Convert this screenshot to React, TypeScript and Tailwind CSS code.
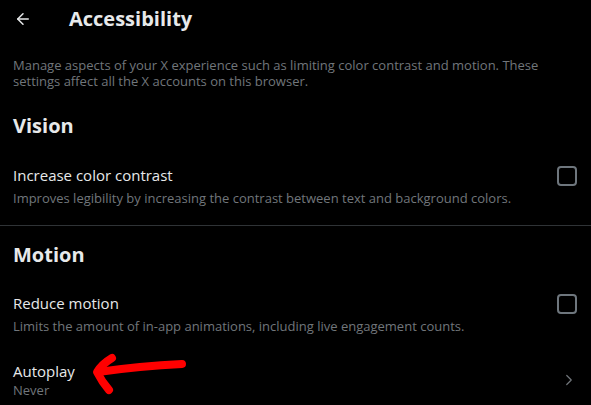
import { ArrowLeft, ChevronRight } from 'lucide-react';

const font = { fontFamily: '"Segoe UI", "Open Sans", "Noto Sans", sans-serif' };

function CheckRow({ title, desc }: { title: string; desc: string }) {
  return (
    <div className="flex items-start justify-between px-[13px] py-[10px]">
      <div className="flex flex-col">
        <span className="text-[15px] leading-[20px] text-[#e7e9ea]">{title}</span>
        <span className="mt-[5px] text-[13px] leading-[16px] text-[#71767b]">{desc}</span>
      </div>
      <div className="mr-[1px] mt-[1px] h-[20px] w-[20px] rounded-[4px] border-2 border-[#6e767d]" />
    </div>
  );
}

export default function App() {
  return (
    <div className="h-[405px] w-[591px] overflow-hidden bg-black" style={font}>
      <div className="flex h-[37px] items-center">
        <div className="flex w-[69px] items-center pl-[14px]">
          <ArrowLeft size={18} strokeWidth={2} className="text-[#e7e9ea]" />
        </div>
        <h1 className="text-[20px] font-bold leading-[24px] text-[#e7e9ea]">Accessibility</h1>
      </div>

      <p className="mt-[20px] px-[13px] text-[13px] leading-[16px] text-[#71767b]">
        Manage aspects of your X experience such as limiting color contrast and motion. These settings
        affect all the X accounts on this browser.
      </p>

      <h2 className="mt-[25px] px-[13px] text-[20px] font-bold leading-[24px] text-[#e7e9ea]">Vision</h2>
      <div className="mt-[17px]">
        <CheckRow
          title="Increase color contrast"
          desc="Improves legibility by increasing the contrast between text and background colors."
        />
      </div>
      <div className="mt-[9px] h-px bg-[#2f3336]" />

      <h2 className="mt-[17px] px-[13px] text-[20px] font-bold leading-[24px] text-[#e7e9ea]">Motion</h2>
      <div className="mt-[16px]">
        <CheckRow
          title="Reduce motion"
          desc="Limits the amount of in-app animations, including live engagement counts."
        />
      </div>

      <div className="relative mt-[8px] flex items-center justify-between px-[13px] pt-[9px]">
        <div className="flex flex-col">
          <span className="text-[15px] leading-[20px] text-[#e7e9ea]">Autoplay</span>
          <span className="mt-[1px] text-[13px] leading-[16px] text-[#71767b]">Never</span>
        </div>
        <ChevronRight size={18} strokeWidth={1.6} className="text-[#71767b]" />
        <svg className="absolute left-[80px] top-[-2px]" width="120" height="50" viewBox="80 350 120 50">
          <g fill="none" stroke="#ff0000" strokeWidth="8" strokeLinecap="round" strokeLinejoin="round">
            <path d="M182 364 Q140 366 98 372" />
            <path d="M112 358 Q102 364 97 372 Q102 382 109 390" />
          </g>
        </svg>
      </div>
    </div>
  );
}
